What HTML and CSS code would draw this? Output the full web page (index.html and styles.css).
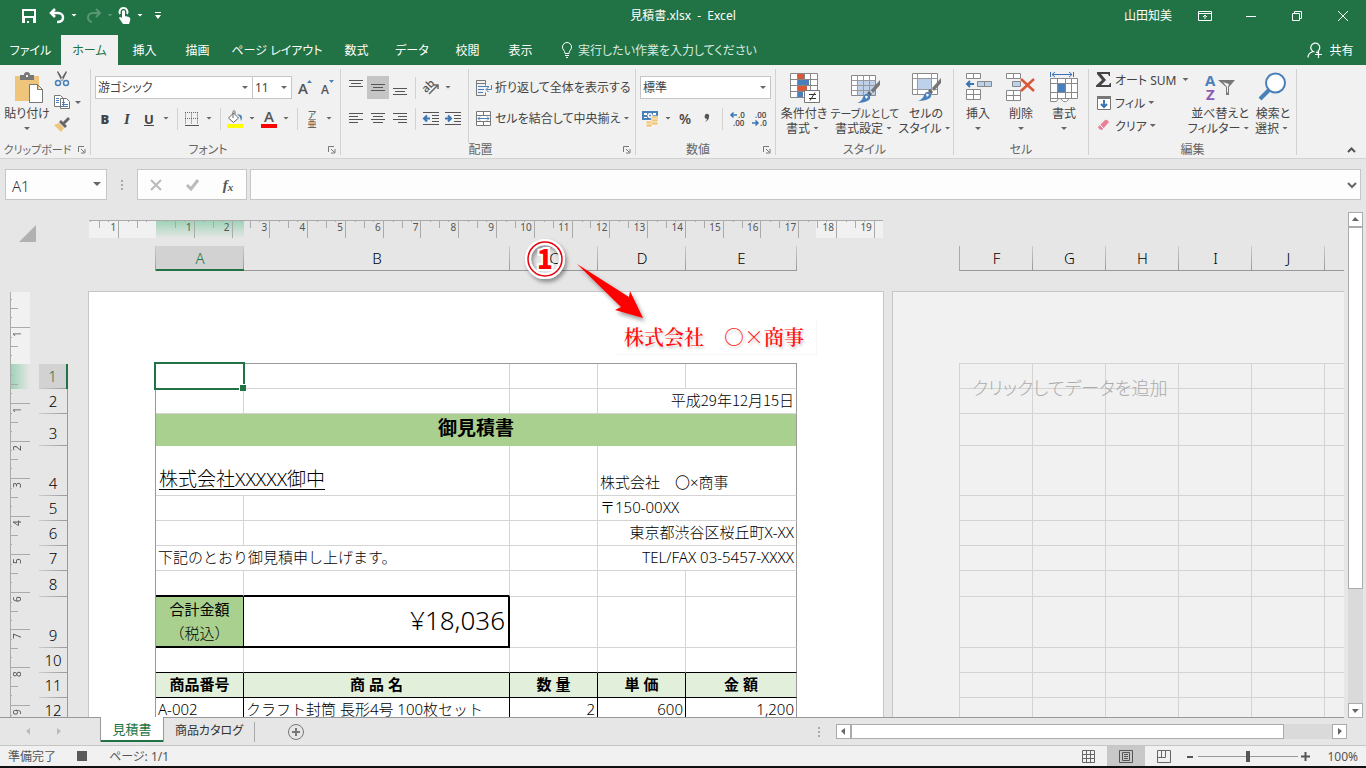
FILE: index.html
```html
<!DOCTYPE html>
<html lang="ja">
<head>
<meta charset="utf-8">
<title>見積書.xlsx - Excel</title>
<link rel="stylesheet" href="styles.css">
</head>
<body>
<div class="app">
  <header class="titlebar">
    <div class="quick">
      <button class="q-btn" aria-label="上書き保存"><svg width="16" height="16" viewBox="0 0 16 16"><path fill="#fff" fill-rule="evenodd" d="M1 1h14v14H1zM3 3v5h10V3zM4 10v5h2v-2h2v2h4v-5z"/></svg></button>
      <button class="q-btn q-undo" aria-label="元に戻す"><svg width="16" height="16" viewBox="0 0 16 16"><path fill="none" stroke="#fff" stroke-width="2.500" d="M6 1 2 5l4 4M2 5h7c3 0 5 2 5 4.500S12 14 8 14"/></svg></button>
      <i class="caret light"></i>
      <button class="q-btn q-redo faded" aria-label="やり直し"><svg width="16" height="16" viewBox="0 0 16 16"><path fill="none" stroke="#fff" stroke-width="2" d="m10 1 4 4-4 4M14 5H7C4 5 2 7 2 9.500S4 14 6 14"/></svg></button>
      <i class="caret light faded"></i>
      <button class="q-btn q-touch" aria-label="タッチ/マウス モードの切り替え"><svg width="14" height="18" viewBox="0 0 14 18"><path fill="none" stroke="#fff" stroke-width="2" d="M2 7a4 4 0 1 1 7 0"/><path fill="#fff" d="M4 4q1.500-1.500 3 0v5l4 1q2 1 1 4l-1 3H5L1 11q1-2 3 0z"/></svg></button>
      <i class="caret light"></i>
      <button class="q-btn q-more" aria-label="クイック アクセス ツール バーのユーザー設定"><svg width="8" height="8" viewBox="0 0 8 8"><path fill="#fff" d="M1 0h6v1H1zM1 3h6L4 7z"/></svg></button>
    </div>
    <div class="doc-title">見積書.xlsx&nbsp; -&nbsp; Excel</div>
    <div class="window-tools">
      <span class="user">山田知美</span>
      <button class="win" aria-label="リボンの表示オプション"><svg width="14" height="12" viewBox="0 0 14 12"><path fill="none" stroke="#fff" d="M.5 1.500h13v9H.5zM.5 3.500h13M7 9V5M5 7l2-2 2 2"/></svg></button>
      <button class="win" aria-label="最小化"><svg width="10" height="10" viewBox="0 0 10 10"><path stroke="#fff" d="M0 5.500h10"/></svg></button>
      <button class="win" aria-label="元に戻す (縮小)"><svg width="10" height="10" viewBox="0 0 10 10"><path fill="none" stroke="#fff" d="M.5 2.500h7v7h-7zM2.500 2V.5h7v7H8"/></svg></button>
      <button class="win" aria-label="閉じる"><svg width="10" height="10" viewBox="0 0 10 10"><path stroke="#fff" d="m0 0 10 10M10 0 0 10"/></svg></button>
    </div>
  </header>

  <nav class="tabs" role="tablist">
    <button role="tab" class="t-file">ファイル</button>
    <button role="tab" class="current" aria-selected="true">ホーム</button>
    <button role="tab">挿入</button>
    <button role="tab">描画</button>
    <button role="tab" class="t-layout">ページ レイアウト</button>
    <button role="tab">数式</button>
    <button role="tab" class="t-data">データ</button>
    <button role="tab">校閲</button>
    <button role="tab">表示</button>
    <label class="tell" for="tell"><svg width="12" height="16" viewBox="0 0 12 16"><path fill="none" stroke="#fff" d="M4 11.500c0-3-2.500-3.500-2.500-6.500a4.500 4.500 0 0 1 9 0c0 3-2.500 3.500-2.500 6.500zM4 13.500h4M5 15.500h2"/></svg></label>
    <input id="tell" class="tell-box" placeholder="実行したい作業を入力してください">
    <button class="share"><svg width="16" height="16" viewBox="0 0 16 16"><path fill="none" stroke="#fff" stroke-width="1.200" d="M7.500 10a4.500 4.500 0 1 1 3-.5M1 15.500c0-3 2-5 5-6M9 10l2 1M8 12.500h7M11.500 9v7"/></svg>共有</button>
  </nav>

  <section class="ribbon">
    <div class="group g-clip">
      <div class="body">
        <button class="big"><svg width="32" height="32" viewBox="0 0 32 32"><path fill="#eec57a" d="M4 4h24v25H4z"/><path fill="#777" d="M9 3h4q0-3 3-3t3 3h4v5H9z"/><path fill="#f1f1f1" d="M15 3h2v2h-2z"/><path fill="#fff" stroke="#777" d="M18.500 12.500h8l5 5v13h-13zM26.500 12.500v5h5"/></svg><span>貼り付け</span><i class="caret"></i></button>
        <div class="stack">
          <button class="mini" aria-label="切り取り"><svg width="16" height="16" viewBox="0 0 16 16"><path fill="#666" d="m3 1 1-1 5 8-1.500 2zM13 1l-1-1-5 8 1.500 2z"/><circle cx="4" cy="12" r="2.500" fill="none" stroke="#4a80ba" stroke-width="1.500"/><circle cx="12" cy="12" r="2.500" fill="none" stroke="#4a80ba" stroke-width="1.500"/></svg></button>
          <button class="mini" aria-label="コピー"><svg width="16" height="16" viewBox="0 0 16 16"><path fill="#fff" stroke="#777" d="M.5 1.500h6l3 3v8h-9zM6.500 4.500h6l3 3v7h-9z"/><path stroke="#4a80ba" d="M2 4.500h3M2 6.500h3M2 8.500h3M8 8.500h3M8 10.500h6M8 12.500h6"/></svg></button>
          <button class="mini" aria-label="書式のコピー"><svg width="16" height="16" viewBox="0 0 16 16"><path fill="#eec57a" d="m0 8 5-2 5 5-3 4z"/><path fill="#666" d="m5 5 2-2 6 6-2 2zM9 5l5-5 2 2-5 5z"/></svg></button>
        </div>
        <i class="caret"></i>
      </div>
      <div class="caption"><span>クリップボード</span><button class="launch" aria-label="クリップボードの詳細"><svg width="8" height="8" viewBox="0 0 8 8"><path fill="none" stroke="#777" d="M.5 6V.5H6M3 3l3 3M7 3v4H3"/></svg></button></div>
    </div>

    <div class="group g-font">
      <div class="body rows">
        <div class="row combos">
          <select class="combo font-name" aria-label="フォント"><option>游ゴシック</option></select><select class="combo font-size" aria-label="フォント サイズ"><option>11</option></select>
          <button class="ib gap-left" aria-label="拡大"><svg width="16" height="18" viewBox="0 0 16 18"><text class="glyph" x="0" y="15" font-size="15">A</text><path fill="#4a80ba" d="m9 4 2.500-3L14 4z"/></svg></button>
          <button class="ib" aria-label="縮小"><svg width="16" height="18" viewBox="0 0 16 18"><text class="glyph" x="1" y="15" font-size="12">A</text><path fill="#4a80ba" d="m9 1 2.500 3L14 1z"/></svg></button>
        </div>
        <div class="row">
          <button class="ib letter"><b>B</b></button><button class="ib letter"><em>I</em></button><button class="ib letter"><u>U</u></button><i class="caret"></i>
          <hr class="sep">
          <button class="ib" aria-label="罫線"><svg width="14" height="14" viewBox="0 0 14 14"><path stroke="#666" stroke-dasharray="1 1" fill="none" d="M.5.500v12M6.500.500v12M12.500.500v12M0 .5h14M0 6.500h14"/><path stroke="#555" d="M0 13.500h14"/></svg></button><i class="caret"></i>
          <hr class="sep">
          <button class="ib" aria-label="塗りつぶしの色"><svg width="18" height="18" viewBox="0 0 18 18"><path fill="#fff" stroke="#666" d="m2.500 8 5-5 5 5-5 4.500zM7 8V1.500q1.500-2 2 0V4"/><path fill="#4a80ba" d="m11 4 4 1q2 2 0 6l-1-4z"/><path fill="#ff0" d="M1 14h16v4H1z"/></svg></button><i class="caret"></i>
          <button class="ib" aria-label="フォントの色"><svg width="16" height="18" viewBox="0 0 16 18"><text class="glyph" x="3" y="12" font-size="15">A</text><path fill="#f00" d="M0 14h16v4H0z"/></svg></button><i class="caret"></i>
          <hr class="sep">
          <button class="ib ruby" aria-label="ふりがなの表示"><span>ア</span><span>亜</span></button><i class="caret"></i>
        </div>
      </div>
      <div class="caption"><span>フォント</span><button class="launch" aria-label="フォントの設定"><svg width="8" height="8" viewBox="0 0 8 8"><path fill="none" stroke="#777" d="M.5 6V.5H6M3 3l3 3M7 3v4H3"/></svg></button></div>
    </div>

    <div class="group g-align">
      <div class="body">
        <div class="rows align-left">
          <div class="row">
            <button class="ib" aria-label="上揃え"><svg width="14" height="16" viewBox="0 0 14 16"><path stroke="#555" d="M0 .5h14M2 3.500h10M0 6.500h14"/></svg></button><button class="ib pressed" aria-label="上下中央揃え"><svg width="14" height="16" viewBox="0 0 14 16"><path stroke="#555" d="M0 4.500h14M2 7.500h10M0 10.500h14"/></svg></button><button class="ib" aria-label="下揃え"><svg width="14" height="16" viewBox="0 0 14 16"><path stroke="#555" d="M0 8.500h14M2 11.500h10M0 14.500h14"/></svg></button>
            <hr class="sep">
            <button class="ib" aria-label="方向"><svg width="17" height="17" viewBox="0 0 17 17"><g transform="rotate(-45 8 8)"><text class="glyph" x="0" y="9" font-size="11">ab</text></g><path fill="none" stroke="#666" stroke-width="1.500" d="m6 15 9-9M11 6h4v4"/></svg></button><i class="caret"></i>
          </div>
          <div class="row">
            <button class="ib" aria-label="左揃え"><svg width="14" height="12" viewBox="0 0 14 12"><path stroke="#555" d="M0 .5h14M0 3.500h9M0 6.500h14M0 9.500h9"/></svg></button><button class="ib" aria-label="中央揃え"><svg width="14" height="12" viewBox="0 0 14 12"><path stroke="#555" d="M0 .5h14M2 3.500h10M0 6.500h14M2 9.500h10"/></svg></button><button class="ib" aria-label="右揃え"><svg width="14" height="12" viewBox="0 0 14 12"><path stroke="#555" d="M0 .5h14M5 3.500h9M0 6.500h14M5 9.500h9"/></svg></button>
            <hr class="sep">
            <button class="ib" aria-label="インデントを減らす"><svg width="16" height="14" viewBox="0 0 16 14"><path stroke="#555" d="M0 .5h16M9 3.500h7M9 6.500h7M9 9.500h7M0 12.500h16"/><path fill="none" stroke="#3a74b4" stroke-width="2" d="M7 6.500H1M4 3.500l-3 3 3 3"/></svg></button><button class="ib" aria-label="インデントを増やす"><svg width="16" height="14" viewBox="0 0 16 14"><path stroke="#555" d="M0 .5h16M9 3.500h7M9 6.500h7M9 9.500h7M0 12.500h16"/><path fill="none" stroke="#3a74b4" stroke-width="2" d="M0 6.500h6M3 3.500l3 3-3 3"/></svg></button>
          </div>
        </div>
        <div class="rows align-right">
          <div class="row"><button class="cmd"><svg width="16" height="16" viewBox="0 0 16 16"><path fill="none" stroke="#777" d="M.5.500h9v3h-9zM.5 3.500v12h9v-3M9.500 3.500v2"/><path stroke="#4a80ba" fill="none" d="M2 6.500h11M2 9.500h6M2 12.500h5M15.500 5v4.500h-5M12.500 7l-2.500 2.500L12.500 12"/></svg>折り返して全体を表示する</button></div>
          <div class="row"><button class="cmd"><svg width="16" height="16" viewBox="0 0 16 16"><path fill="#fff" stroke="#777" d="M.5.500h14v14H.5zM.5 4.500h14M.5 10.500h14M7.500.500v4M7.500 10.500v4"/><path fill="none" stroke="#4a80ba" d="M2 7.500h11M4 5.500l-2 2 2 2M11 5.500l2 2-2 2"/></svg>セルを結合して中央揃え</button><i class="caret push"></i></div>
        </div>
      </div>
      <div class="caption"><span>配置</span><button class="launch" aria-label="配置の設定"><svg width="8" height="8" viewBox="0 0 8 8"><path fill="none" stroke="#777" d="M.5 6V.5H6M3 3l3 3M7 3v4H3"/></svg></button></div>
    </div>

    <div class="group g-num">
      <div class="body rows">
        <div class="row"><select class="combo format" aria-label="数値の書式"><option>標準</option></select></div>
        <div class="row">
          <button class="ib" aria-label="通貨表示形式"><svg width="18" height="17" viewBox="0 0 18 17"><path fill="#4a80ba" d="M0 1h16v9H0z"/><path fill="#fff" d="M2 3h3v2H2zM11 3h3v2h-3zM2 7h3v1H2z"/><circle cx="8" cy="5.500" r="2.500" fill="#fff"/><circle cx="8" cy="5.500" r="1" fill="#4a80ba"/><g fill="#eec57a" stroke="#fff" stroke-width=".5"><rect x="9" y="6" width="7" height="3" rx="1"/><rect x="9" y="9" width="7" height="3" rx="1"/><rect x="4" y="11" width="6" height="3" rx="1"/><rect x="9" y="12" width="7" height="3" rx="1"/><rect x="4" y="14" width="6" height="3" rx="1"/></g></svg></button><i class="caret"></i>
          <button class="ib percent">%</button><button class="ib comma" aria-label="桁区切り"><svg width="8" height="12" viewBox="0 0 8 12"><path fill="#555" d="M2 2a2.200 2.200 0 1 1 4 2Q6 7 2 9q2-2 2-3-2 0-2.500-2z"/></svg></button>
          <hr class="sep">
          <button class="ib" aria-label="小数点以下の表示桁数を増やす"><svg width="16" height="16" viewBox="0 0 16 16"><path fill="none" stroke="#3a74b4" stroke-width="1.500" d="M7 4H1M3.500 1.500 1 4l2.500 2.500"/><text class="dec" x="8" y="7">.0</text><text class="dec" x="3" y="15">.00</text></svg></button><button class="ib" aria-label="小数点以下の表示桁数を減らす"><svg width="16" height="16" viewBox="0 0 16 16"><path fill="none" stroke="#3a74b4" stroke-width="1.500" d="M0 12h6M3.500 9.500 6 12l-2.500 2.500"/><text class="dec" x="3" y="7">.00</text><text class="dec" x="8" y="15">.0</text></svg></button>
        </div>
      </div>
      <div class="caption"><span>数値</span><button class="launch" aria-label="数値の設定"><svg width="8" height="8" viewBox="0 0 8 8"><path fill="none" stroke="#777" d="M.5 6V.5H6M3 3l3 3M7 3v4H3"/></svg></button></div>
    </div>

    <div class="group g-style">
      <div class="body">
        <button class="big w54"><svg width="32" height="32" viewBox="0 0 32 32"><path fill="#fff" d="M2.500 1.500h27v24h-27z"/><path fill="#d8593a" d="M10 2h6v5h-6zM10 14h9v6h-9z"/><path fill="#4a80ba" d="M10 8h11v5H10zM10 20h5v5h-5z"/><path fill="none" stroke="#888" d="M2.500 1.500h27v24h-27zM2.500 7.500h27M2.500 13.500h27M2.500 19.500h27M9.500 1.500v24M16.500 1.500v6M22.500 1.500v24"/><path fill="#fff" stroke="#777" d="M16.500 18.500h15v12h-15z"/><path fill="none" stroke="#333" d="M21 22.500h7M21 26.500h7M27 20.500l-5 8"/></svg><span>条件付き</span><span>書式<i class="caret"></i></span></button>
        <button class="big w66"><svg width="32" height="32" viewBox="0 0 32 32"><path fill="#fff" stroke="#888" d="M2.500 3.500h24v20h-24z"/><path fill="#bdd2ea" d="M9 9h17v14H9z"/><path fill="none" stroke="#999" d="M2.500 8.500h24M2.500 13.500h24M2.500 18.500h24M8.500 3.500v20M14.500 3.500v20M20.500 3.500v20"/><path fill="#777" d="m31 8-9 10 2 3 7-8z"/><path fill="#666" d="m20 19 3 3-2 2-3-3z"/><path fill="#4a80ba" d="M8 31q5-2 6-6 2-4 5-3 4 3 1 6-4 3-12 3z"/><path fill="#fff" d="M16 24q2-1 3 1l-2 2z"/></svg><span class="tight">テーブルとして</span><span>書式設定<i class="caret"></i></span></button>
        <button class="big w54"><svg width="32" height="32" viewBox="0 0 32 32"><path fill="#fff" stroke="#888" d="M2.500 1.500h25v21h-25z"/><path fill="#bdd2ea" d="M8 7h14v10H8z"/><path fill="none" stroke="#999" d="M2.500 6.500h25M2.500 17.500h25M7.500 1.500v21M21.500 1.500v21"/><path fill="#777" d="m31 6-9 10 2 3 7-8z"/><path fill="#666" d="m20 17 3 3-2 2-3-3z"/><path fill="#4a80ba" d="M8 29q5-2 6-6 2-4 5-3 4 3 1 6-4 3-12 3z"/><path fill="#fff" d="M16 22q2-1 3 1l-2 2z"/></svg><span>セルの</span><span>スタイル<i class="caret"></i></span></button>
      </div>
      <div class="caption"><span>スタイル</span></div>
    </div>

    <div class="group g-cell">
      <div class="body">
        <button class="big w42"><svg width="28" height="32" viewBox="0 0 28 32"><g fill="#fff" stroke="#888"><path d="M2.500 1.500h14v5h-14zM9.500 1.500v5M2.500 17.500h14v10h-14zM9.500 17.500v10M2.500 22.500h14"/><path fill="#bdd2ea" d="M13.500 9.500h14v5h-14zM20.500 9.500v5"/></g><path fill="none" stroke="#3a74b4" stroke-width="2" d="M10 12H3M6 9l-3 3 3 3"/></svg><span>挿入</span><i class="caret"></i></button>
        <button class="big w42"><svg width="30" height="32" viewBox="0 0 30 32"><g fill="#fff" stroke="#888"><path d="M.5 1.500h14v5h-14zM7.500 1.500v5M.5 18.500h14v10h-14zM7.500 18.500v10M.5 23.500h14"/><path fill="#bdd2ea" d="M6.500 9.500h8v5h-8z"/></g><path stroke="#d8593a" stroke-width="2.500" d="m15 7 13 12M28 7 15 19"/></svg><span>削除</span><i class="caret"></i></button>
        <button class="big w42"><svg width="28" height="32" viewBox="0 0 28 32"><path fill="#fff" stroke="#888" d="M.5 6.500h27v20h-27zM.5 11.500h27M.5 20.500h27M7.500 6.500v20M15.500 6.500v20M21.500 6.500v20"/><path fill="#4a80ba" d="M8 12h7v8H8z"/><path fill="none" stroke="#3a74b4" d="M.5 0v5M23.500 0v5M2 2.500h20M5 0 2 2.500 5 5M19 0l3 2.500L19 5"/><path fill="#fff" stroke="#888" d="M.5 26.500h8l-2 3h-6zM10.500 26.500h8q-1 4-5 3z"/></svg><span>書式</span><i class="caret"></i></button>
      </div>
      <div class="caption"><span>セル</span></div>
    </div>

    <div class="group g-edit">
      <div class="body">
        <div class="edit-list">
          <button class="cmd"><svg width="16" height="16" viewBox="0 0 16 16"><path fill="#444" d="M1 0h13v4h-1l-1-2H5l5 6-5 5h8l1-2h1v4H0v-1.500L6 8 1 2z"/></svg>オート SUM<i class="caret push"></i></button>
          <button class="cmd"><svg width="16" height="16" viewBox="0 0 16 16"><path fill="#fff" stroke="#777" d="M1.500 1.500h13v13h-13z"/><path fill="#777" d="M1 1h14v3H1z"/><path fill="none" stroke="#3a74b4" stroke-width="2" d="M8 5v7M5 9l3 3 3-3"/></svg>フィル<i class="caret"></i></button>
          <button class="cmd"><svg width="16" height="16" viewBox="0 0 16 16"><path fill="#e88098" d="m2 9 7-7q2-1 4 2l-7 8q-3 0-4-3z"/><path stroke="#fff" d="m4 7 4 4"/></svg>クリア<i class="caret"></i></button>
        </div>
        <button class="big w54"><svg width="32" height="32" viewBox="0 0 32 32"><text class="sort-a" x="1" y="14">A</text><text class="sort-z" x="2" y="28">Z</text><path fill="#777" d="M14 8h17l-6 7v8h-3v-8z"/><path fill="#f1f1f1" d="m19 10 4 5v6l1-1v-5l1-3z"/></svg><span>並べ替えと</span><span>フィルター<i class="caret"></i></span></button>
        <button class="big w42"><svg width="32" height="32" viewBox="0 0 32 32"><path stroke="#4a80ba" stroke-width="4" d="m3 27 9-9"/><circle cx="18.500" cy="11" r="9.500" fill="#fff" stroke="#4a80ba" stroke-width="2"/></svg><span>検索と</span><span>選択<i class="caret"></i></span></button>
      </div>
      <div class="caption"><span>編集</span></div>
    </div>
    <button class="collapse" aria-label="リボンを折りたたむ"><svg width="9" height="6" viewBox="0 0 9 6"><path fill="none" stroke="#555" stroke-width="2" d="m1 5 3.500-3.500L8 5"/></svg></button>
  </section>

  <section class="formula">
    <div class="namebox"><input aria-label="名前ボックス" value="A1"><i class="caret"></i></div>
    <span class="grip"></span>
    <div class="fx">
      <button aria-label="キャンセル"><svg width="12" height="12" viewBox="0 0 12 12"><path stroke="#bbb" stroke-width="2" d="m1 1 10 10M11 1 1 11"/></svg></button>
      <button aria-label="入力"><svg width="13" height="12" viewBox="0 0 13 12"><path fill="none" stroke="#bbb" stroke-width="3" d="m1 6 4 4 7-9"/></svg></button>
      <button aria-label="関数の挿入" class="fx-btn"><i>f</i><small>x</small></button>
    </div>
    <div class="entry"><input aria-label="数式バー"><svg width="8" height="6" viewBox="0 0 8 6"><path fill="none" stroke="#666" stroke-width="2" d="m0 1 4 4 4-4"/></svg></div>
  </section>

  <main class="workspace">
    <div class="canvas">
      <div class="corner"><svg width="17" height="17" viewBox="0 0 17 17"><path fill="#b1b1b1" d="M17 0v17H0z"/></svg></div>
      <div class="hruler"><span>1</span><span class="blank"></span><span>1</span><span>2</span><span>3</span><span>4</span><span>5</span><span>6</span><span>7</span><span>8</span><span>9</span><span>10</span><span>11</span><span>12</span><span>13</span><span>14</span><span>15</span><span>16</span><span>17</span><span>18</span><span>19</span><span></span></div>
      <div class="cols main-cols"><span class="sel">A</span><span>B</span><span>C</span><span>D</span><span>E</span></div>
      <div class="cols next-cols"><span>F</span><span>G</span><span>H</span><span>I</span><span>J</span><span></span></div>
      <div class="gutter">
        <div class="vruler"><span></span><span><b>1</b></span><span class="blank"></span><span><b>1</b></span><span><b>2</b></span><span><b>3</b></span><span><b>4</b></span><span><b>5</b></span><span><b>6</b></span><span><b>7</b></span><span><b>8</b></span><span><b>9</b></span></div>
        <div class="rowheads"><span class="sel">1</span><span>2</span><span class="h3">3</span><span class="h4">4</span><span>5</span><span>6</span><span>7</span><span class="h8">8</span><span class="h9">9</span><span>10</span><span>11</span><span>12</span></div>
      </div>
      <div class="page">
        <div class="sheet-wrap">
          <table class="sheet">
            <colgroup><col class="c88"><col class="c266"><col class="c88"><col class="c88"><col class="c111"></colgroup>
            <tr><td></td><td></td><td></td><td></td><td></td></tr>
            <tr><td></td><td></td><td></td><td colspan="2" class="r date">平成29年12月15日</td></tr>
            <tr class="h3"><td colspan="5" class="heading">御見積書</td></tr>
            <tr class="h4"><td colspan="2" class="client"><u>株式会社XXXXX御中</u></td><td></td><td colspan="2">株式会社　〇×商事</td></tr>
            <tr><td></td><td></td><td></td><td colspan="2">〒150-00XX</td></tr>
            <tr><td></td><td></td><td></td><td colspan="2" class="r">東京都渋谷区桜丘町X-XX</td></tr>
            <tr><td colspan="2">下記のとおり御見積申し上げます。</td><td></td><td colspan="2" class="r">TEL/FAX 03-5457-XXXX</td></tr>
            <tr class="h8"><td class="thick"></td><td class="thick"></td><td></td><td></td><td></td></tr>
            <tr class="h9"><td class="thick total-label"><b>合計金額</b><br>（税込）</td><td class="thick thick-r total">¥18,036</td><td></td><td></td><td></td></tr>
            <tr><td class="kb"></td><td class="kb"></td><td class="kb"></td><td class="kb"></td><td class="kb"></td></tr>
            <tr class="head"><th>商品番号</th><th>商 品 名</th><th>数 量</th><th>単 価</th><th>金 額</th></tr>
            <tr class="data"><td>A-002</td><td>クラフト封筒 長形4号 100枚セット</td><td class="r">2</td><td class="r">600</td><td class="r">1,200</td></tr>
          </table>
          <i class="selection"></i>
        </div>
      </div>
      <div class="page next">
        <div class="sheet-wrap">
          <table class="sheet">
            <colgroup><col class="c73"><col class="c73"><col class="c73"><col class="c73"><col class="c73"><col class="c73"></colgroup>
            <tr><td></td><td></td><td></td><td></td><td></td><td></td></tr>
            <tr><td></td><td></td><td></td><td></td><td></td><td></td></tr>
            <tr class="h3"><td></td><td></td><td></td><td></td><td></td><td></td></tr>
            <tr class="h4"><td></td><td></td><td></td><td></td><td></td><td></td></tr>
            <tr><td></td><td></td><td></td><td></td><td></td><td></td></tr>
            <tr><td></td><td></td><td></td><td></td><td></td><td></td></tr>
            <tr><td></td><td></td><td></td><td></td><td></td><td></td></tr>
            <tr class="h8"><td></td><td></td><td></td><td></td><td></td><td></td></tr>
            <tr class="h9"><td></td><td></td><td></td><td></td><td></td><td></td></tr>
            <tr><td></td><td></td><td></td><td></td><td></td><td></td></tr>
            <tr><td></td><td></td><td></td><td></td><td></td><td></td></tr>
            <tr><td></td><td></td><td></td><td></td><td></td><td></td></tr>
          </table>
          <span class="hint">クリックしてデータを追加</span>
        </div>
      </div>
      <svg class="callout" width="130" height="96" viewBox="0 0 130 96">
        <defs><filter id="soft" x="-20%" y="-20%" width="150%" height="150%"><feDropShadow dx="2" dy="3" stdDeviation="2" flood-opacity=".4"/></filter></defs>
        <g filter="url(#soft)"><circle cx="25" cy="24" r="17" fill="none" stroke="#fff" stroke-width="6"/></g>
        <circle cx="25" cy="24" r="17" fill="none" stroke="#e8000c" stroke-width="1.500"/>
        <text class="num" x="25" y="34" text-anchor="middle">1</text>
        <path fill="#f00" filter="url(#soft)" d="m57 29 52 33 1-6 13 27-28-8 6-3z"/>
      </svg>
      <div class="stamp">株式会社　○×商事</div>
    </div>
    <div class="vscroll"><button aria-label="上へ"><i class="tri up"></i></button><div class="track"><div class="thumb"></div></div><button aria-label="下へ"><i class="tri down"></i></button></div>
  </main>

  <nav class="sheets">
    <div class="sheet-nav"><i class="tri left"></i><i class="tri right"></i></div>
    <button class="sheet-tab active">見積書</button>
    <button class="sheet-tab">商品カタログ</button>
    <hr class="tab-sep">
    <button class="add" aria-label="新しいシート"><svg width="16" height="16" viewBox="0 0 16 16"><circle cx="8" cy="8" r="7.500" fill="none" stroke="#777"/><path stroke="#777" stroke-width="2" d="M4 8h8M8 4v8"/></svg></button>
    <span class="grip"></span>
    <div class="hscroll"><button aria-label="左へ"><i class="tri left"></i></button><div class="track"><div class="thumb"></div></div><button aria-label="右へ"><i class="tri right"></i></button></div>
  </nav>

  <footer class="status">
    <span class="ready">準備完了</span><i class="macro"></i><span>ページ: 1/1</span>
    <div class="view">
      <button class="vb" aria-label="標準"><svg width="13" height="13" viewBox="0 0 13 13"><path fill="none" stroke="#666" d="M.5.500h12v12H.5zM.5 4.500h12M.5 8.500h12M4.500.500v12M8.500.500v12"/></svg></button><button class="vb on" aria-label="ページ レイアウト"><svg width="14" height="13" viewBox="0 0 14 13"><path fill="none" stroke="#555" d="M.5.500h13v12H.5zM3.500 2.500h7v8h-7zM5 4.500h4M5 6.500h4M5 8.500h4"/></svg></button><button class="vb" aria-label="改ページ プレビュー"><svg width="14" height="13" viewBox="0 0 14 13"><path fill="none" stroke="#666" d="M.5.500h13v12H.5zM.5 7.500h8v-7M4.500.500v7"/></svg></button>
      <button class="zb" aria-label="縮小"><svg width="9" height="9" viewBox="0 0 9 9"><path stroke="#555" stroke-width="2" d="M1 5h6"/></svg></button>
      <input class="zoom" type="range" min="10" max="190" value="100" aria-label="ズーム">
      <button class="zb" aria-label="拡大"><svg width="9" height="9" viewBox="0 0 9 9"><path stroke="#555" stroke-width="2" d="M0 4.500h9M4.500 0v9"/></svg></button>
      <span class="pct">100%</span>
    </div>
  </footer>
</div>
</body>
</html>
```
FILE: styles.css
```css
* { box-sizing: border-box; }
body {
  margin: 0;
  font: 12px/15px "Noto Sans", "Noto Sans CJK JP", sans-serif;
  font-feature-settings: "palt";
  color: #333;
}
button, input, select {
  font: inherit;
  font-feature-settings: inherit;
  color: inherit;
  background: none;
  border: 0;
  border-radius: 0;
  margin: 0;
  padding: 0;
}
button { display: flex; align-items: center; justify-content: center; white-space: nowrap; }
svg { display: block; flex: none; overflow: visible; }
hr { border: 0; margin: 0; }

.app {
  display: flex;
  flex-direction: column;
  height: 100vh;
  overflow: hidden;
  background: #e6e6e6;
  border-bottom: 2px solid #111;
}

.caret {
  flex: none;
  width: 12px;
  height: 4px;
  background: #666;
  clip-path: polygon(3px 0, 9px 0, 6px 3px);
}
.caret.light { background: #fff; }
.caret.push { margin-left: auto; }
.faded, .caret.faded { opacity: .25; }

/* title bar */
.titlebar {
  flex: none;
  display: grid;
  grid-template-columns: 1fr auto 1fr;
  align-items: center;
  height: 35px;
  padding-bottom: 4px;
  background: #217346;
  color: #fff;
}
.quick { display: flex; align-items: center; padding-left: 17px; }
.q-btn { width: 24px; height: 24px; }
.q-undo { width: 22px; margin-left: 5px; }
.q-redo { width: 22px; margin-left: 3px; margin-right: -1px; }
.q-touch { width: 18px; }
.window-tools { display: flex; align-items: center; justify-content: flex-end; }
.user { padding-right: 10px; }
.win { width: 46px; height: 30px; }

/* ribbon tabs */
.tabs {
  flex: none;
  display: flex;
  height: 30px;
  background: #217346;
  color: #fff;
}
.tabs button { flex: none; width: 53px; }
.tabs .t-file { width: 61px; }
.tabs .t-layout { width: 106px; }
.tabs .t-data { width: 58px; }
.tabs .current { width: 57px; background: #f1f1f1; color: #217346; }
.tell { display: flex; align-items: center; padding: 0 5px 0 14px; }
.tell-box { flex: 1; min-width: 0; }
.tell-box::placeholder { color: #d8eadf; opacity: 1; }
.tabs .share { gap: 6px; width: 70px; padding-right: 1px; }

/* ribbon */
.ribbon {
  flex: none;
  display: flex;
  padding: 4px 0 3px;
  background: #f1f1f1;
  border-bottom: 1px solid #d2d2d2;
  color: #444;
}
.group {
  flex: none;
  display: flex;
  flex-direction: column;
  height: 86px;
  border-right: 1px solid #d2d2d2;
}
.body { flex: 1; display: flex; }
.rows { display: flex; flex-direction: column; gap: 8px; padding-top: 7px; }
.row { display: flex; align-items: center; height: 23px; }
.caption { display: flex; align-items: center; height: 12px; color: #666; }
.caption span { flex: 1; text-align: center; white-space: nowrap; }
.g-clip .caption, .tight { font-size: 11px; }
.launch { width: 8px; height: 8px; margin: 2px 4px 0 3px; }
.sep { width: 1px; height: 22px; margin: 0 4px; background: #d2d2d2; }
.ib { flex: none; width: 22px; height: 23px; }
.pressed { background: #c5c5c5; }
.letter { font: 700 13px/16px "Open Sans", sans-serif; }
.letter em { font-family: "Liberation Serif", serif; font-size: 15px; }
.ruby { flex-direction: column; font-size: 9px; line-height: 9px; }
.glyph { font-family: "Open Sans", sans-serif; font-weight: 600; fill: #555; }
.dec { font: 600 8px "Open Sans", sans-serif; fill: #444; }
.percent { font: 600 14px/18px "Open Sans", sans-serif; }

.combo {
  appearance: none;
  height: 23px;
  padding: 0 2px;
  border: 1px solid #c6c6c6;
  background: #fff url("data:image/svg+xml,%3Csvg xmlns='http://www.w3.org/2000/svg' width='6' height='3'%3E%3Cpath fill='%23666' d='M0 0h6L3 3z'/%3E%3C/svg%3E") no-repeat right 4px center;
}
.font-name { width: 158px; }
.font-size { width: 40px; margin-left: -1px; }
.format { width: 131px; }
.gap-left { margin-left: 3px; }

.big {
  flex-direction: column;
  justify-content: flex-start;
  flex: none;
  padding-top: 3px;
  line-height: 15px;
}
.big svg { margin-bottom: 2px; }
.big span { display: flex; align-items: center; }
.big > .caret { margin-top: 6px; }
.w54 { width: 54px; }
.w66 { width: 66px; }
.w42 { width: 42px; }
.cmd { gap: 3px; }
.cmd .caret { margin-left: -3px; }
.cmd .caret.push { margin-left: 0; }

.g-clip { width: 91px; }
.g-clip .big { width: 42px; margin-left: 6px; }
.g-clip .body > .caret { margin-top: 32px; }
.stack { display: flex; flex-direction: column; gap: 7px; padding: 2px 2px 0 6px; }
.mini { width: 16px; height: 16px; }
.g-font { width: 250px; }
.g-font .body { padding-left: 4px; }
.g-font .sep { margin-left: 5px; margin-right: 3px; }
.g-font .letter:first-child { margin-left: -1px; }
.g-align { width: 295px; }
.g-align .body { padding-left: 4px; }
.align-left { padding-right: 4px; border-right: 1px solid #d2d2d2; }
.align-right { flex: 1; padding: 7px 5px 0 7px; }
.g-num { width: 140px; }
.g-num .body { padding-left: 4px; }
.g-style { width: 178px; }
.g-style .body { padding-left: 1px; gap: 1px; }
.g-cell { width: 135px; }
.g-cell .body { padding-left: 3px; gap: 1px; }
.g-edit { width: 208px; }
.g-edit .body { padding-left: 7px; gap: 5px; }
.edit-list { display: flex; flex-direction: column; gap: 7px; padding-top: 3px; width: 92px; }
.edit-list .cmd { justify-content: flex-start; height: 16px; gap: 3px; }
.sort-a { font: 700 15px "Open Sans", sans-serif; fill: #4a80ba; }
.sort-z { font: 700 15px "Open Sans", sans-serif; fill: #8e5bb5; }
.collapse { margin: auto 10px 2px auto; }

/* formula bar */
.formula { flex: none; display: flex; padding: 10px 5px 0; height: 41px; }
.formula > div { display: flex; align-items: center; background: #fdfdfd; border: 1px solid #c6c6c6; }
.namebox { width: 102px; }
.namebox input { flex: 1; min-width: 0; padding: 3px 0 0 6px; font: 300 15px/20px "Noto Sans", sans-serif; }
.namebox .caret { width: 14px; height: 5px; margin-right: 2px; clip-path: polygon(3px 0, 11px 0, 7px 4px); }
.grip {
  align-self: center;
  width: 2px;
  height: 10px;
  background: repeating-linear-gradient(#aaa 0 2px, transparent 2px 4px);
}
.formula .grip { margin: 0 14px; }
.fx { width: 110px; margin-right: 3px; }
.fx button { flex: 1; }
.fx-btn { font: italic 700 15px/18px "Liberation Serif", serif; color: #555; }
.fx-btn small { font-size: 11px; padding-top: 4px; }
.entry { flex: 1; padding-right: 4px; }
.entry input { flex: 1; }

/* worksheet area */
.workspace { flex: 1; min-height: 0; display: flex; }
.canvas {
  position: relative;
  flex: 1;
  min-width: 0;
  overflow: hidden;
  display: grid;
  grid-template-columns: 88px 796px 1fr;
  grid-template-rows: 18px 25px 1fr;
  row-gap: 8px;
  column-gap: 0;
  padding-top: 20px;
  border-bottom: 1px solid #999;
  font: 300 15px/24px "Noto Sans", "Noto Sans CJK JP", sans-serif;
  font-feature-settings: normal;
  color: #000;
}
.corner { padding: 5px 0 0 19px; }
.hruler {
  grid-column: 2;
  display: flex;
  overflow: hidden;
  margin: 0 1px;
  padding-left: 68px;
  border-top: 1px solid #aaa;
  background:
    linear-gradient(#f1f1f1, #f1f1f1) left / 67px 100% no-repeat,
    linear-gradient(#9fd3b8, #e6e6e6) 67px 0 / 88px 100% no-repeat,
    linear-gradient(#f1f1f1, #f1f1f1) right / 67px 100% no-repeat;
}
.hruler span {
  flex: none;
  width: 1cm;
  height: 18px;
  padding-right: 2px;
  border-right: 1px solid #aaa;
  text-align: right;
  font: 10px/12px "Noto Sans", sans-serif;
  color: #555;
  background:
    linear-gradient(#aaa, #aaa) 50% 0 / 1px 7px no-repeat,
    linear-gradient(#aaa, #aaa) 25% 0 / 1px 1px no-repeat,
    linear-gradient(#aaa, #aaa) 75% 0 / 1px 1px no-repeat;
}
.hruler span:first-child { margin-left: -2cm; }
.hruler .blank, .vruler .blank { border-color: transparent; }
.cols { display: flex; overflow: hidden; }
.main-cols { grid-column: 2; margin: 0 86px 0 67px; padding-left: 1px; }
.next-cols { grid-column: 3; margin-left: 75px; }
.cols span {
  flex: none;
  width: 88px;
  text-align: center;
  border-bottom: 1px solid #999;
  background: linear-gradient(#ccc, #999) right / 1px 100% no-repeat;
}
.cols span:nth-child(2) { width: 266px; }
.cols span:nth-child(5) { width: 111px; }
.cols span.sel { background-color: #d2d2d2; border-bottom: 2px solid #217346; color: #217346; }
.main-cols, .next-cols { background: linear-gradient(#ccc, #999) left / 1px 100% no-repeat; }
.next-cols span:nth-child(n) { width: 73px; }
.next-cols span:first-child { width: 74px; border-left: 1px solid #aaa; }

.gutter { display: flex; padding-left: 10px; gap: 9px; margin-top: 13px; min-height: 0; }
.vruler {
  flex: none;
  width: 20px;
  overflow: hidden;
  padding-top: 73px;
  border-left: 1px solid #aaa;
  background:
    linear-gradient(#f1f1f1, #f1f1f1) 0 0 / 100% 72px no-repeat,
    linear-gradient(90deg, #9fd3b8, #e6e6e6) 0 72px / 100% 25px no-repeat;
}
.vruler span {
  display: block;
  height: 1cm;
  padding-top: 2px;
  border-top: 1px solid #aaa;
  background:
    linear-gradient(#aaa, #aaa) 0 50% / 7px 1px no-repeat,
    linear-gradient(#aaa, #aaa) 0 25% / 1px 1px no-repeat,
    linear-gradient(#aaa, #aaa) 0 75% / 1px 1px no-repeat;
}
.vruler span:first-child { margin-top: -2cm; }
.vruler b {
  display: block;
  height: 7px;
  width: 12px;
  writing-mode: vertical-rl;
  transform: rotate(180deg);
  font: 10px/12px "Noto Sans", sans-serif;
  color: #555;
}
.rowheads { flex: none; width: 29px; padding-top: 72px; }
.rowheads span {
  display: flex;
  align-items: flex-end;
  justify-content: center;
  height: 25px;
  padding-bottom: 1px;
  border-right: 1px solid #999;
  background: linear-gradient(90deg, #ccc, #999) bottom / 100% 1px no-repeat;
}
.rowheads .sel { background-color: #d2d2d2; border-right: 2px solid #217346; color: #217346; }
.rowheads .h3 { height: 32px; }
.rowheads .h4 { height: 50px; }
.rowheads .h8 { height: 26px; }
.rowheads .h9 { height: 51px; }

.page {
  margin-top: 12px;
  padding: 71px 0 0 66px;
  min-height: 0;
  background: #fff;
  border: 1px solid #c6c6c6;
  border-bottom: 0;
}
.page.next { margin-left: 8px; background: #f1f1f1; border-right: 0; overflow: hidden; }
.sheet-wrap { position: relative; width: max-content; }
.sheet {
  table-layout: fixed;
  width: 642px;
  border-spacing: 0;
  border-top: 1px solid #999;
  border-left: 1px solid #999;
}
.c88 { width: 88px; }
.c266 { width: 266px; }
.c111 { width: 111px; }
.c73 { width: 73px; }
.sheet td, .sheet th {
  padding: 0 2px 3px;
  border-right: 1px solid #d4d4d4;
  border-bottom: 1px solid #d4d4d4;
  line-height: 20px;
  vertical-align: bottom;
  white-space: nowrap;
}
.sheet tr { height: 25px; }
.sheet .h3 { height: 32px; }
.sheet .h4 { height: 50px; }
.sheet .h8 { height: 26px; }
.sheet .h9 { height: 51px; }
.sheet tr td:last-child { border-right-color: #999; }
.sheet .r { text-align: right; }
.sheet .date { font-family: "Noto Sans CJK JP", sans-serif; }
.sheet .heading { background: #a9d08e; border-bottom-color: #a9d08e; text-align: center; vertical-align: middle; font-size: 19px; font-weight: 700; }
.sheet .client { padding-left: 3px; font-size: 19px; line-height: 26px; }
.client u { text-underline-offset: 3px; text-decoration-thickness: 1px; }
.sheet .thick { border-bottom: 2px solid #000; }
.sheet .thick-r { border-right: 2px solid #000; }
.sheet .total-label { padding-bottom: 1px; background: #a9d08e; border-right-color: #000; text-align: center; line-height: 24px; }
.sheet .total { padding-right: 3px; text-align: right; vertical-align: middle; font-size: 26px; line-height: 36px; }
.sheet .kb { border-bottom-color: #000; }
.head th { background: #e2efda; font-weight: 700; }
.sheet .head th, .sheet .data td { border-right-color: #000; border-bottom-color: #000; }
.sheet .head th:last-child, .sheet .data td:last-child { border-right-color: #999; }
.next .sheet { width: 439px; border-color: #d4d4d4; }
.next .sheet td:last-child { border-right-color: #d4d4d4; }
.hint {
  position: absolute;
  left: 13px;
  top: 11px;
  font-size: 18px;
  line-height: 28px;
  font-feature-settings: "palt";
  color: #ababab;
}
.selection {
  position: absolute;
  left: -1px;
  top: -1px;
  width: 91px;
  height: 28px;
  border: 2px solid #217346;
}
.selection::after {
  content: "";
  position: absolute;
  right: -3px;
  bottom: -3px;
  width: 6px;
  height: 6px;
  background: #217346;
  border: solid #fff;
  border-width: 1px 0 0 1px;
}

.callout { position: absolute; left: 520px; top: 35px; }
.num { font: 900 26px "Noto Sans CJK JP", sans-serif; fill: #f00; stroke: #fff; stroke-width: 4px; paint-order: stroke; }
.stamp {
  position: absolute;
  left: 616px;
  top: 120px;
  padding: 0 12px 0 8px;
  font: 600 20px/34px "Noto Serif CJK JP", "Noto Sans CJK JP", serif;
  color: #ff1414;
  text-shadow: 0 0 2px #fff, 0 0 2px #fff, 1px 2px 3px rgba(0, 0, 0, .25);
  border: solid #f7f7f7;
  border-width: 0 1px 1px 0;
}

/* scroll bars */
.vscroll { flex: none; display: flex; flex-direction: column; width: 15px; margin: 12px 3px 0 4px; }
.vscroll button, .hscroll button { flex: none; width: 15px; height: 15px; background: #fff; border: 1px solid #ababab; }
.track { flex: 1; background: #dadada; }
.thumb { background: #fff; border: 1px solid #ababab; }
.vscroll .thumb { height: 76%; }
.hscroll { display: flex; width: 511px; }
.hscroll .thumb { width: 90%; height: 15px; }
.tri { width: 7px; height: 7px; background: #666; }
.up { clip-path: polygon(0 5px, 7px 5px, 3px 1px); }
.down { clip-path: polygon(0 2px, 7px 2px, 3px 6px); }
.left { clip-path: polygon(5px 0, 5px 7px, 1px 3px); }
.right { clip-path: polygon(2px 0, 2px 7px, 6px 3px); }

/* sheet tabs */
.sheets { flex: none; display: flex; align-items: center; height: 27px; padding-right: 19px; }
.sheet-nav { display: flex; justify-content: space-between; width: 100px; padding: 0 38px 0 25px; }
.sheet-nav .tri { background: #bbb; }
.sheet-tab { align-self: flex-start; height: 24px; width: 90px; }
.sheet-tab.active {
  position: relative;
  width: 64px;
  height: 25px;
  margin-top: -1px;
  font-size: 13px;
  background: #fff;
  border: solid #999;
  border-width: 0 1px;
  box-shadow: inset 0 -2px #217346;
  color: #217346;
}
.tab-sep { width: 1px; height: 20px; background: #aaa; }
.add { margin-left: 33px; }
.sheets .grip { margin: 0 16px 0 auto; }

/* status bar */
.status {
  flex: none;
  display: flex;
  align-items: center;
  height: 21px;
  padding-left: 8px;
  background: #f1f1f1;
  border-top: 1px solid #c6c6c6;
  color: #555;
}
.macro { width: 10px; height: 10px; margin: 0 22px 0 21px; background: #5a5a5a; }
.view { display: flex; align-items: center; margin-left: auto; align-self: stretch; padding-right: 8px; }
.vb { width: 38px; align-self: stretch; }
.vb.on { background: #c8c8c8; }
.zb { width: 15px; align-self: stretch; }
.zoom { appearance: none; width: 100px; height: 15px; background: linear-gradient(#999, #999) center / 100% 1px no-repeat; }
.zoom::-webkit-slider-thumb { appearance: none; width: 4px; height: 11px; background: #555; }
.pct { width: 45px; text-align: right; }
```
